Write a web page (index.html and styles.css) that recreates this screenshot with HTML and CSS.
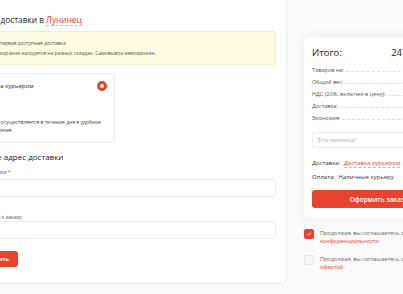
FILE: index.html
```html
<!DOCTYPE html>
<html lang="ru">
<head>
  <meta charset="UTF-8">
  <meta name="viewport" content="width=device-width, initial-scale=1.0">
  <title>Оформление заказа</title>
  <link rel="stylesheet" href="styles.css">
</head>
<body>
  <div class="page">
    <main class="checkout">
      <h1 class="title">Способ доставки в <span class="city">Лунинец</span></h1>

      <div class="notice">
        <p>Выбрана первая доступная доставка</p>
        <p>Товары в корзине находятся на разных складах. Самовывоз невозможен.</p>
      </div>

      <div class="option">
        <div class="option-head">
          <span class="option-name">Доставка курьером</span>
          <span class="radio"></span>
        </div>
        <p class="option-desc">Доставка осуществляется в течение дня в удобное для вас время.</p>
      </div>

      <h2 class="subtitle">Укажите адрес доставки</h2>
      <label class="field-label">Адрес доставки <span class="req">*</span></label>
      <div class="input"></div>
      <label class="field-label second">Примечание к заказу:</label>
      <div class="input"></div>

      <button class="btn-save">Сохранить</button>
    </main>

    <aside class="sidebar">
      <div class="summary">
        <div class="total">
          <span>Итого:</span>
          <span>247,50 руб.</span>
        </div>
        <div class="row"><span>Товаров на:</span><i></i><span>247,50 руб.</span></div>
        <div class="row"><span>Общий вес:</span><i></i><span>1,2 кг</span></div>
        <div class="row"><span>НДС (20%, включен в цену):</span><i></i><span>41,25 руб.</span></div>
        <div class="row"><span>Доставка:</span><i></i><span>0 руб.</span></div>
        <div class="row"><span>Экономия:</span><i></i><span>0 руб.</span></div>

        <div class="promo">Есть промокод?</div>

        <p class="info">Доставка: <a href="#" class="link">Доставка курьером</a></p>
        <p class="info pay">Оплата: <span>Наличные курьеру</span></p>

        <button class="btn-order">Оформить заказ</button>
      </div>

      <div class="agree">
        <span class="check on">
          <svg viewBox="0 0 10 10" width="6" height="6"><path d="M2 5.2 L4.2 7.2 L8 3" fill="none" stroke="#fff" stroke-width="1.6"/></svg>
        </span>
        <p>Продолжая, вы соглашаетесь с <a href="#">политикой конфиденциальности</a></p>
      </div>
      <div class="agree">
        <span class="check"></span>
        <p>Продолжая, вы соглашаетесь с публичной <a href="#">офертой</a></p>
      </div>
    </aside>
  </div>
</body>
</html>
```

FILE: styles.css
```css
* { margin: 0; padding: 0; box-sizing: border-box; }
body {
  font-family: 'Open Sans', sans-serif;
  background: #fbfbfb; color: #333;
  overflow: hidden;
}

.page {
  display: flex; align-items: flex-start; gap: 17px;
  margin-left: -42px; margin-top: -3px;
}

/* левая колонка */
.checkout {
  width: 329px; flex-shrink: 0;
  background: #fff; border: 1px solid #ececec; border-radius: 6px;
  padding: 16px 10px 16px 10px;
  display: flex; flex-direction: column; align-items: flex-start;
}

.title { font-size: 8.3px; line-height: 12px; font-weight: 400; color: #222; }
.city { color: #e8432f; border-bottom: 1px dashed #f4b4ab; }

.notice {
  align-self: stretch; margin-top: 5px;
  background: #fefce1; border: 1px solid #f4efc6; border-radius: 2px;
  padding: 6px 8px 6px 6px;
  font-size: 5px; line-height: 10px; color: #5d5340;
}

.option {
  width: 146px; margin-top: 8px;
  border: 1px solid #ededed; border-radius: 4px;
  padding: 7px 7px 8px 7px;
}
.option-head { display: flex; justify-content: space-between; align-items: center; height: 10px; }
.option-name { font-size: 6px; color: #222; }
.radio {
  width: 10px; height: 10px; border-radius: 50%;
  border: 3px solid #e8432f; background: #fff;
}
.option-desc { margin-top: 27px; font-size: 5px; line-height: 8px; color: #444; }

.subtitle { margin-top: 9px; font-size: 8px; line-height: 10px; font-weight: 400; color: #222; }

.field-label { display: block; margin-top: 6px; font-size: 5px; line-height: 8px; color: #555; }
.field-label.second { margin-top: 16px; }
.req { color: #e8432f; }

.input {
  align-self: stretch; height: 18px; margin-top: 3px;
  border: 1px solid #eeeeee; border-radius: 3px; background: #fff;
}
.field-label.second + .input { margin-top: 0; }

.btn-save {
  margin-top: 12px; width: 49px; height: 16px;
  background: #e8432f; color: #fff; border: none; border-radius: 3px;
  font-family: inherit; font-size: 5.5px; font-weight: 700;
}

/* правая колонка */
.sidebar { width: 146px; flex-shrink: 0; padding-top: 40px; }

.summary {
  background: #fff; border-radius: 6px;
  box-shadow: 0 0 12px rgba(0, 0, 0, 0.06);
  padding: 10px 8px 10px 8px;
}

.total {
  display: flex; justify-content: space-between;
  font-size: 9.5px; line-height: 12px; color: #222;
  margin-bottom: 5px;
}

.row {
  display: flex; align-items: baseline; gap: 2px;
  font-size: 5.5px; line-height: 12px; color: #555;
}
.row i { flex: 1; border-bottom: 1px dashed #e2e2e2; }

.promo {
  margin-top: 8px; height: 16px;
  border: 1px solid #eeeeee; border-radius: 3px;
  padding-left: 5px;
  font-size: 5px; line-height: 14px; color: #aaa;
}

.info { margin-top: 10px; font-size: 6px; line-height: 10px; color: #333; }
.info.pay { margin-top: 4px; }
.info .link { color: #e8432f; text-decoration: none; border-bottom: 1px dashed #f0a89f; margin-left: 2px; }
.info span { margin-left: 2px; }

.btn-order {
  display: block; width: 100%; margin-top: 8px; height: 18px;
  background: #e8432f; color: #fff; border: none; border-radius: 3px;
  font-family: inherit; font-size: 6.5px; font-weight: 600;
}

.agree { display: flex; gap: 6px; margin-top: 11px; }
.agree + .agree { margin-top: 10px; }
.agree p { font-size: 5.5px; line-height: 8px; color: #666; }
.agree a { color: #e8432f; text-decoration: none; }

.check {
  width: 10px; height: 10px; flex-shrink: 0;
  border: 1px solid #e6e6e6; border-radius: 2px; background: #f7f7f7;
  display: flex; justify-content: center; align-items: center;
}
.check.on { background: #e8432f; border-color: #e8432f; }
```
